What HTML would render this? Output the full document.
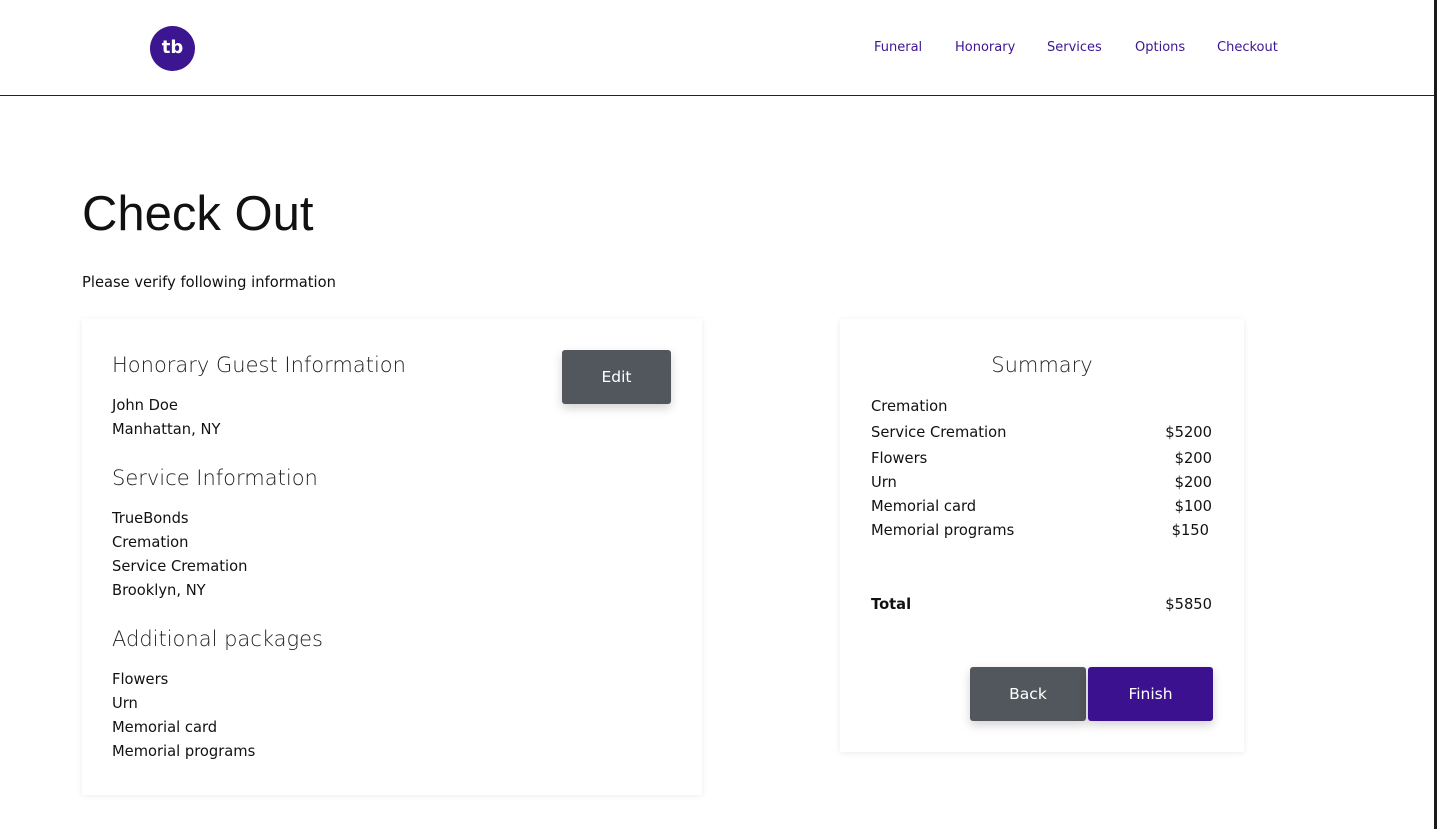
<!DOCTYPE html>
<html><head><style>
*{margin:0;padding:0;box-sizing:border-box}
body{width:1437px;height:829px;background:#fff;font-family:"DejaVu Sans","Liberation Sans",sans-serif;color:#111;position:relative;overflow:hidden}
.a{position:absolute;white-space:nowrap}
.nav{font-size:13px;color:#3c1591;top:40px}
.card{position:absolute;background:#fff;box-shadow:0 1px 6px rgba(0,0,0,0.08)}
.h{font-size:21px;font-weight:300;color:#222}
.t{font-size:14.7px;line-height:24px;color:#111}
.btn{position:absolute;color:#fff;font-size:15.5px;display:flex;align-items:center;justify-content:center;border-radius:3px;box-shadow:0 4px 10px rgba(0,0,0,0.18)}
</style></head><body>
<div class="a" style="left:150px;top:26px;width:45px;height:45px;border-radius:50%;background:#3c1591;color:#fff;font-weight:bold;font-size:18px;text-align:center;line-height:44px">tb</div>
<div class="a nav" style="left:874px">Funeral</div>
<div class="a nav" style="left:955px">Honorary</div>
<div class="a nav" style="left:1047px">Services</div>
<div class="a nav" style="left:1135px">Options</div>
<div class="a nav" style="left:1217px">Checkout</div>
<div class="a" style="left:0;top:95px;width:1434px;height:1px;background:#2a1460"></div>
<div class="a" style="left:1434px;top:0;width:3px;height:829px;background:#1a1a1a"></div>
<div class="a" style="left:82px;top:186px;font-size:49px;font-weight:300;color:#111;font-family:'Liberation Sans',sans-serif">Check Out</div>
<div class="a t" style="left:82px;top:271px">Please verify following information</div>

<div class="card" style="left:82px;top:319px;width:620px;height:476px"></div>
<div class="a h" style="left:112px;top:353px">Honorary Guest Information</div>
<div class="btn" style="left:562px;top:350px;width:109px;height:54px;background:#51575c">Edit</div>
<div class="a t" style="left:112px;top:394px">John Doe<br>Manhattan, NY</div>
<div class="a h" style="left:112px;top:466px">Service Information</div>
<div class="a t" style="left:112px;top:507px">TrueBonds<br>Cremation<br>Service Cremation<br>Brooklyn, NY</div>
<div class="a h" style="left:112px;top:627px">Additional packages</div>
<div class="a t" style="left:112px;top:668px">Flowers<br>Urn<br>Memorial card<br>Memorial programs</div>

<div class="card" style="left:840px;top:319px;width:404px;height:433px"></div>
<div class="a h" style="left:840px;width:404px;text-align:center;top:353px">Summary</div>
<div class="a t" style="left:871px;top:395px">Cremation</div>
<div class="a t" style="left:871px;top:421px">Service Cremation</div><div class="a t" style="right:225px;top:421px">$5200</div>
<div class="a t" style="left:871px;top:447px">Flowers</div><div class="a t" style="right:225px;top:447px">$200</div>
<div class="a t" style="left:871px;top:471px">Urn</div><div class="a t" style="right:225px;top:471px">$200</div>
<div class="a t" style="left:871px;top:495px">Memorial card</div><div class="a t" style="right:225px;top:495px">$100</div>
<div class="a t" style="left:871px;top:519px">Memorial programs</div><div class="a t" style="right:228px;top:519px">$150</div>
<div class="a t" style="left:871px;top:593px;font-weight:bold">Total</div><div class="a t" style="right:225px;top:593px">$5850</div>
<div class="btn" style="left:970px;top:667px;width:116px;height:54px;background:#51575c">Back</div>
<div class="btn" style="left:1088px;top:667px;width:125px;height:54px;background:#3c118f">Finish</div>
</body></html>
